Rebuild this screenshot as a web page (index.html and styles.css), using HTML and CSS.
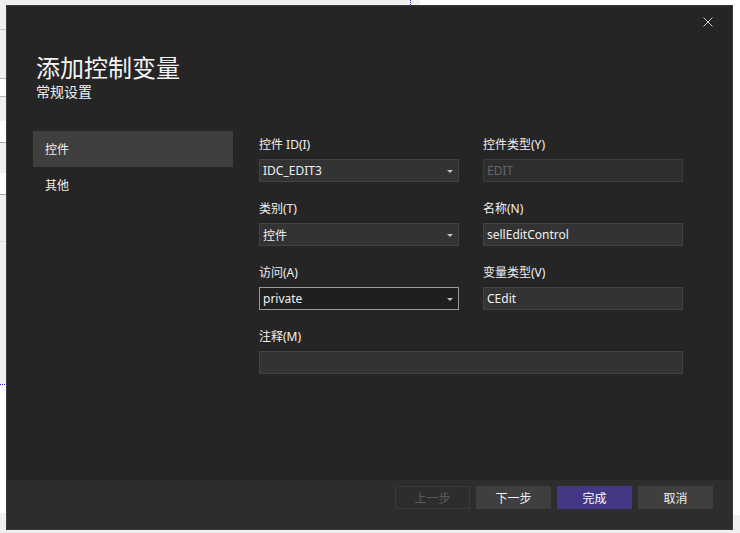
FILE: index.html
```html
<!DOCTYPE html>
<html lang="zh-CN">
<head>
<meta charset="utf-8">
<title>添加控制变量</title>
<link rel="stylesheet" href="styles.css">
</head>
<body>
<div class="desktop">
  <div class="dialog">
    <button class="close" aria-label="关闭">
      <svg width="10" height="10" viewBox="0 0 10 10"><path d="M0.5 0.5 L9.5 9.5 M9.5 0.5 L0.5 9.5" stroke="#c8c8c8" stroke-width="1" fill="none"/></svg>
    </button>
    <div class="main">
      <header class="head">
        <h1 class="title">添加控制变量</h1>
        <div class="subtitle">常规设置</div>
      </header>
      <div class="body">
        <nav class="side">
          <div class="side-item active">控件</div>
          <div class="side-item">其他</div>
        </nav>
        <div class="form">
          <div class="field">
            <div class="label">控件 ID(I)</div>
            <div class="input select"><span>IDC_EDIT3</span><i class="arrow"></i></div>
          </div>
          <div class="field">
            <div class="label">控件类型(Y)</div>
            <div class="input disabled"><span>EDIT</span></div>
          </div>
          <div class="field">
            <div class="label">类别(T)</div>
            <div class="input select"><span>控件</span><i class="arrow"></i></div>
          </div>
          <div class="field">
            <div class="label">名称(N)</div>
            <div class="input"><span>sellEditControl</span></div>
          </div>
          <div class="field">
            <div class="label">访问(A)</div>
            <div class="input select focus"><span>private</span><i class="arrow"></i></div>
          </div>
          <div class="field">
            <div class="label">变量类型(V)</div>
            <div class="input"><span>CEdit</span></div>
          </div>
          <div class="field wide">
            <div class="label">注释(M)</div>
            <div class="input"><span></span></div>
          </div>
        </div>
      </div>
    </div>
    <footer class="foot">
      <button class="btn off">上一步</button>
      <button class="btn">下一步</button>
      <button class="btn primary">完成</button>
      <button class="btn">取消</button>
    </footer>
  </div>
</div>
</body>
</html>
```
FILE: styles.css
```css
html, body {
  margin: 0;
  padding: 0;
}
body {
  width: 740px;
  height: 533px;
  overflow: hidden;
  font-family: "Noto Sans", "Noto Sans CJK SC", sans-serif;
}
.desktop {
  position: relative;
  width: 740px;
  height: 533px;
  background:
    repeating-linear-gradient(to bottom, #2020d0 0 1px, transparent 1px 2px) no-repeat 410px 0 / 1px 5px,
    repeating-linear-gradient(to right, #2020d0 0 1px, transparent 1px 2px) no-repeat 0 384px / 6px 1px,
    linear-gradient(to bottom,
      #f0f0f0 0 29px, #c8c8c8 29px 30px, #f0f0f0 30px 78px, #b8b8b8 78px 79px,
      #ffffff 79px 96px, #b8b8b8 96px 97px, #f0f0f0 97px 121px, #ffffff 121px 142px,
      #a8a8a8 142px 143px, #f0f0f0 143px 173px, #ffffff 173px 194px, #a8a8a8 194px 195px,
      #f0f0f0 195px 241px, #dcdcdc 241px 242px, #f0f0f0 242px 384px, #ffffff 384px 513px,
      #f0f0f0 513px) no-repeat 0 0 / 6px 533px,
    linear-gradient(#ffffff, #ffffff) no-repeat 420px 0 / 320px 515px,
    #f0f0f0;
}
.dialog {
  position: absolute;
  left: 6px;
  top: 5px;
  width: 725px;
  height: 523px;
  border: 1px solid #3a3a3a;
  background: #252525;
  display: flex;
  flex-direction: column;
  color: #f1f1f1;
}
.close {
  position: absolute;
  top: 11px;
  right: 19px;
  width: 10px;
  height: 10px;
  padding: 0;
  border: 0;
  background: none;
  display: flex;
}
.main {
  flex: 1;
  display: flex;
  flex-direction: column;
}
.head {
  padding: 46px 0 0 29px;
  display: flex;
  flex-direction: column;
  gap: 1px;
}
.title {
  margin: 0;
  font-family: "Noto Sans CJK SC", sans-serif;
  font-size: 24px;
  line-height: 29px;
  font-weight: 400;
  color: #f4f4f4;
}
.subtitle {
  font-family: "Noto Sans CJK SC", sans-serif;
  font-size: 14px;
  line-height: 18px;
  color: #f1f1f1;
}
.body {
  display: flex;
  gap: 26px;
  padding: 31px 0 0 26px;
}
.side {
  width: 200px;
  display: flex;
  flex-direction: column;
}
.side-item {
  height: 36px;
  line-height: 36px;
  padding-left: 12px;
  font-family: "Noto Sans CJK SC", sans-serif;
  font-size: 12px;
  color: #f1f1f1;
}
.side-item.active {
  background: #3f3f3f;
}
.form {
  display: grid;
  grid-template-columns: 200px 200px;
  column-gap: 24px;
  row-gap: 18px;
  padding-top: 5px;
  align-content: start;
}
.field.wide {
  grid-column: 1 / 3;
}
.label {
  font-size: 12px;
  line-height: 18px;
  color: #f1f1f1;
  margin-bottom: 5px;
}
.input {
  box-sizing: border-box;
  height: 23px;
  border: 1px solid #434343;
  background: #333333;
  display: flex;
  align-items: center;
  padding: 0 5px 0 3px;
  font-size: 12px;
  color: #f1f1f1;
}
.input span {
  flex: 1;
}
.input.disabled {
  background: #2e2e2e;
  border-color: #3c3c3c;
  color: #666666;
}
.input.focus {
  background: #1f1f1f;
  border-color: #9a9a9a;
}
.arrow {
  width: 0;
  height: 0;
  border-left: 3px solid transparent;
  border-right: 3px solid transparent;
  border-top: 3px solid #c0c0c0;
  margin-top: 1px;
}
.foot {
  height: 49px;
  background: #2d2d2d;
  display: flex;
  justify-content: flex-end;
  align-items: flex-start;
  gap: 6px;
  padding: 6px 19px 0 0;
  box-sizing: border-box;
}
.btn {
  width: 75px;
  height: 23px;
  border: 1px solid #3f3f3f;
  background: #3f3f3f;
  color: #f1f1f1;
  font-family: "Noto Sans CJK SC", sans-serif;
  font-size: 12px;
  padding: 0;
}
.btn.off {
  background: transparent;
  border-color: #3a3a3a;
  color: #5a5a5a;
}
.btn.primary {
  background: #433885;
  border-color: #433885;
  color: #ffffff;
}
```
